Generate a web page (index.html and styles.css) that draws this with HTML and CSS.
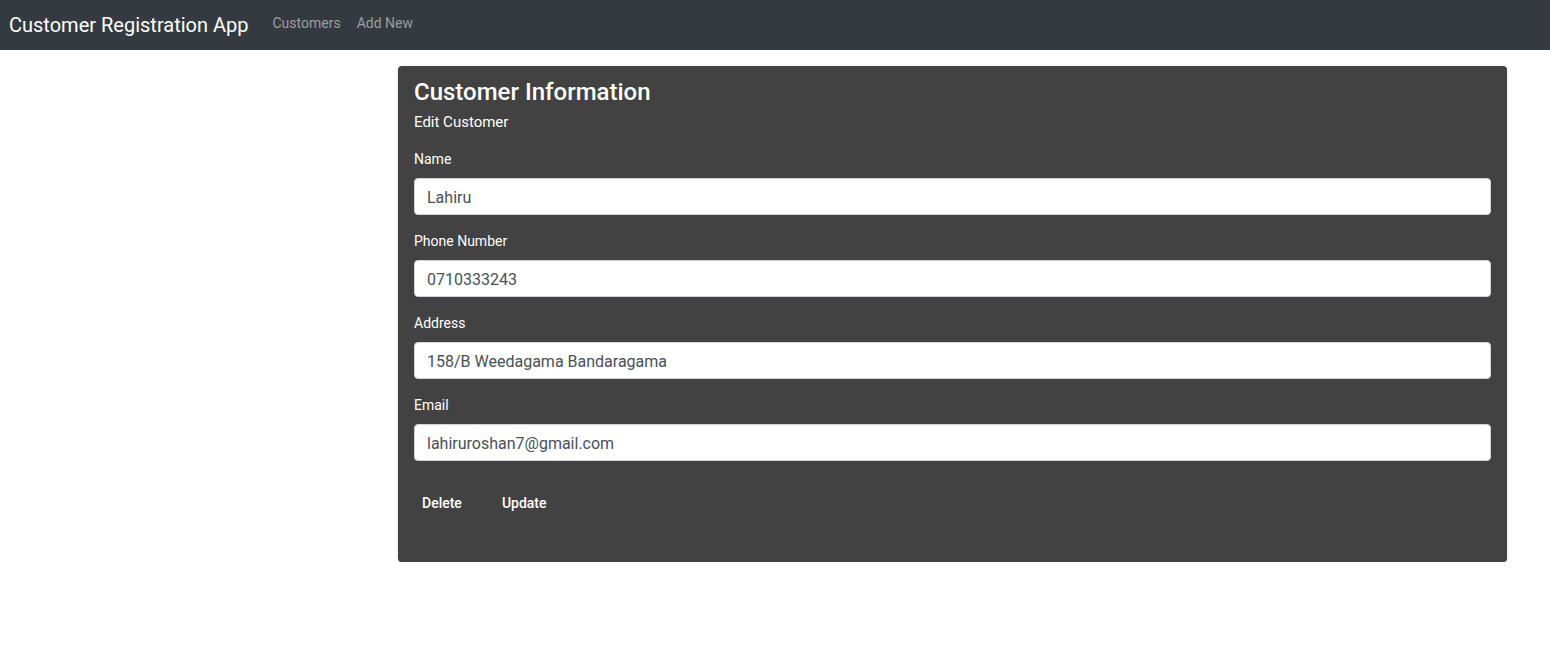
FILE: index.html
```html
<!DOCTYPE html>
<html lang="en">
<head>
<meta charset="utf-8">
<title>Customer Registration App</title>
<link rel="stylesheet" href="styles.css">
</head>
<body>
  <nav class="navbar">
    <a class="brand" href="#">Customer Registration App</a>
    <ul class="nav">
      <li><a class="nav-link" href="#">Customers</a></li>
      <li><a class="nav-link" href="#">Add New</a></li>
    </ul>
  </nav>
  <main class="page">
    <section class="card">
      <h2 class="card-title">Customer Information</h2>
      <div class="card-subtitle">Edit Customer</div>
      <form class="form">
        <div class="form-group">
          <label class="label" for="name">Name</label>
          <input class="input" id="name" type="text" value="Lahiru">
        </div>
        <div class="form-group">
          <label class="label" for="phone">Phone Number</label>
          <input class="input" id="phone" type="text" value="0710333243">
        </div>
        <div class="form-group">
          <label class="label" for="address">Address</label>
          <input class="input" id="address" type="text" value="158/B Weedagama Bandaragama">
        </div>
        <div class="form-group">
          <label class="label" for="email">Email</label>
          <input class="input" id="email" type="text" value="lahiruroshan7@gmail.com">
        </div>
        <div class="actions">
          <button class="btn" type="button">Delete</button>
          <button class="btn" type="button">Update</button>
        </div>
      </form>
    </section>
  </main>
</body>
</html>
```

FILE: styles.css
```css
* { box-sizing: border-box; }
html, body { margin: 0; padding: 0; }
body {
  font-family: Roboto, "Liberation Sans", Arial, sans-serif;
  background: #ffffff;
  color: #212529;
}
.navbar {
  height: 50px;
  background: #343a40;
  display: flex;
  align-items: center;
  padding: 0 9px;
}
.brand {
  font-size: 20px;
  line-height: 30px;
  color: #ffffff;
  text-decoration: none;
  margin-right: 16px;
}
.nav {
  list-style: none;
  margin: 0;
  padding: 0;
  display: flex;
}
.nav-link {
  display: block;
  padding: 0 8px;
  font-size: 14px;
  line-height: 21px;
  color: rgba(255, 255, 255, 0.5);
  text-decoration: none;
  margin-top: -3px;
}
.page {
  padding: 16px 43px 0 398px;
}
.card {
  background: #424242;
  color: #ffffff;
  border-radius: 4px;
  padding: 10px 16px 33px 16px;
  box-shadow: 0 2px 1px -1px rgba(0,0,0,.2), 0 1px 1px 0 rgba(0,0,0,.14), 0 1px 3px 0 rgba(0,0,0,.12);
}
.card-title {
  margin: 0 0 4px 0;
  font-size: 24px;
  line-height: 32px;
  font-weight: 500;
}
.card-subtitle {
  font-size: 15px;
  line-height: 21px;
  margin-bottom: 16px;
}
.form { margin: 0; }
.form-group { margin-bottom: 16px; }
.label {
  display: block;
  font-size: 14px;
  line-height: 21px;
  margin-bottom: 8px;
}
.input {
  display: block;
  width: 100%;
  height: 37px;
  padding: 7px 12px 5px 12px;
  font-family: inherit;
  font-size: 16px;
  line-height: 23px;
  color: #495057;
  background: #ffffff;
  border: 1px solid #ced4da;
  border-radius: 4px;
  outline: none;
}
.actions {
  display: flex;
  gap: 8px;
  padding: 8px 0;
  margin-left: -8px;
}
.btn {
  min-width: 64px;
  height: 36px;
  padding: 0 16px;
  background: transparent;
  border: 0;
  border-radius: 4px;
  color: #ffffff;
  font-family: inherit;
  font-size: 14px;
  font-weight: 500;
  line-height: 36px;
  cursor: pointer;
}
```
